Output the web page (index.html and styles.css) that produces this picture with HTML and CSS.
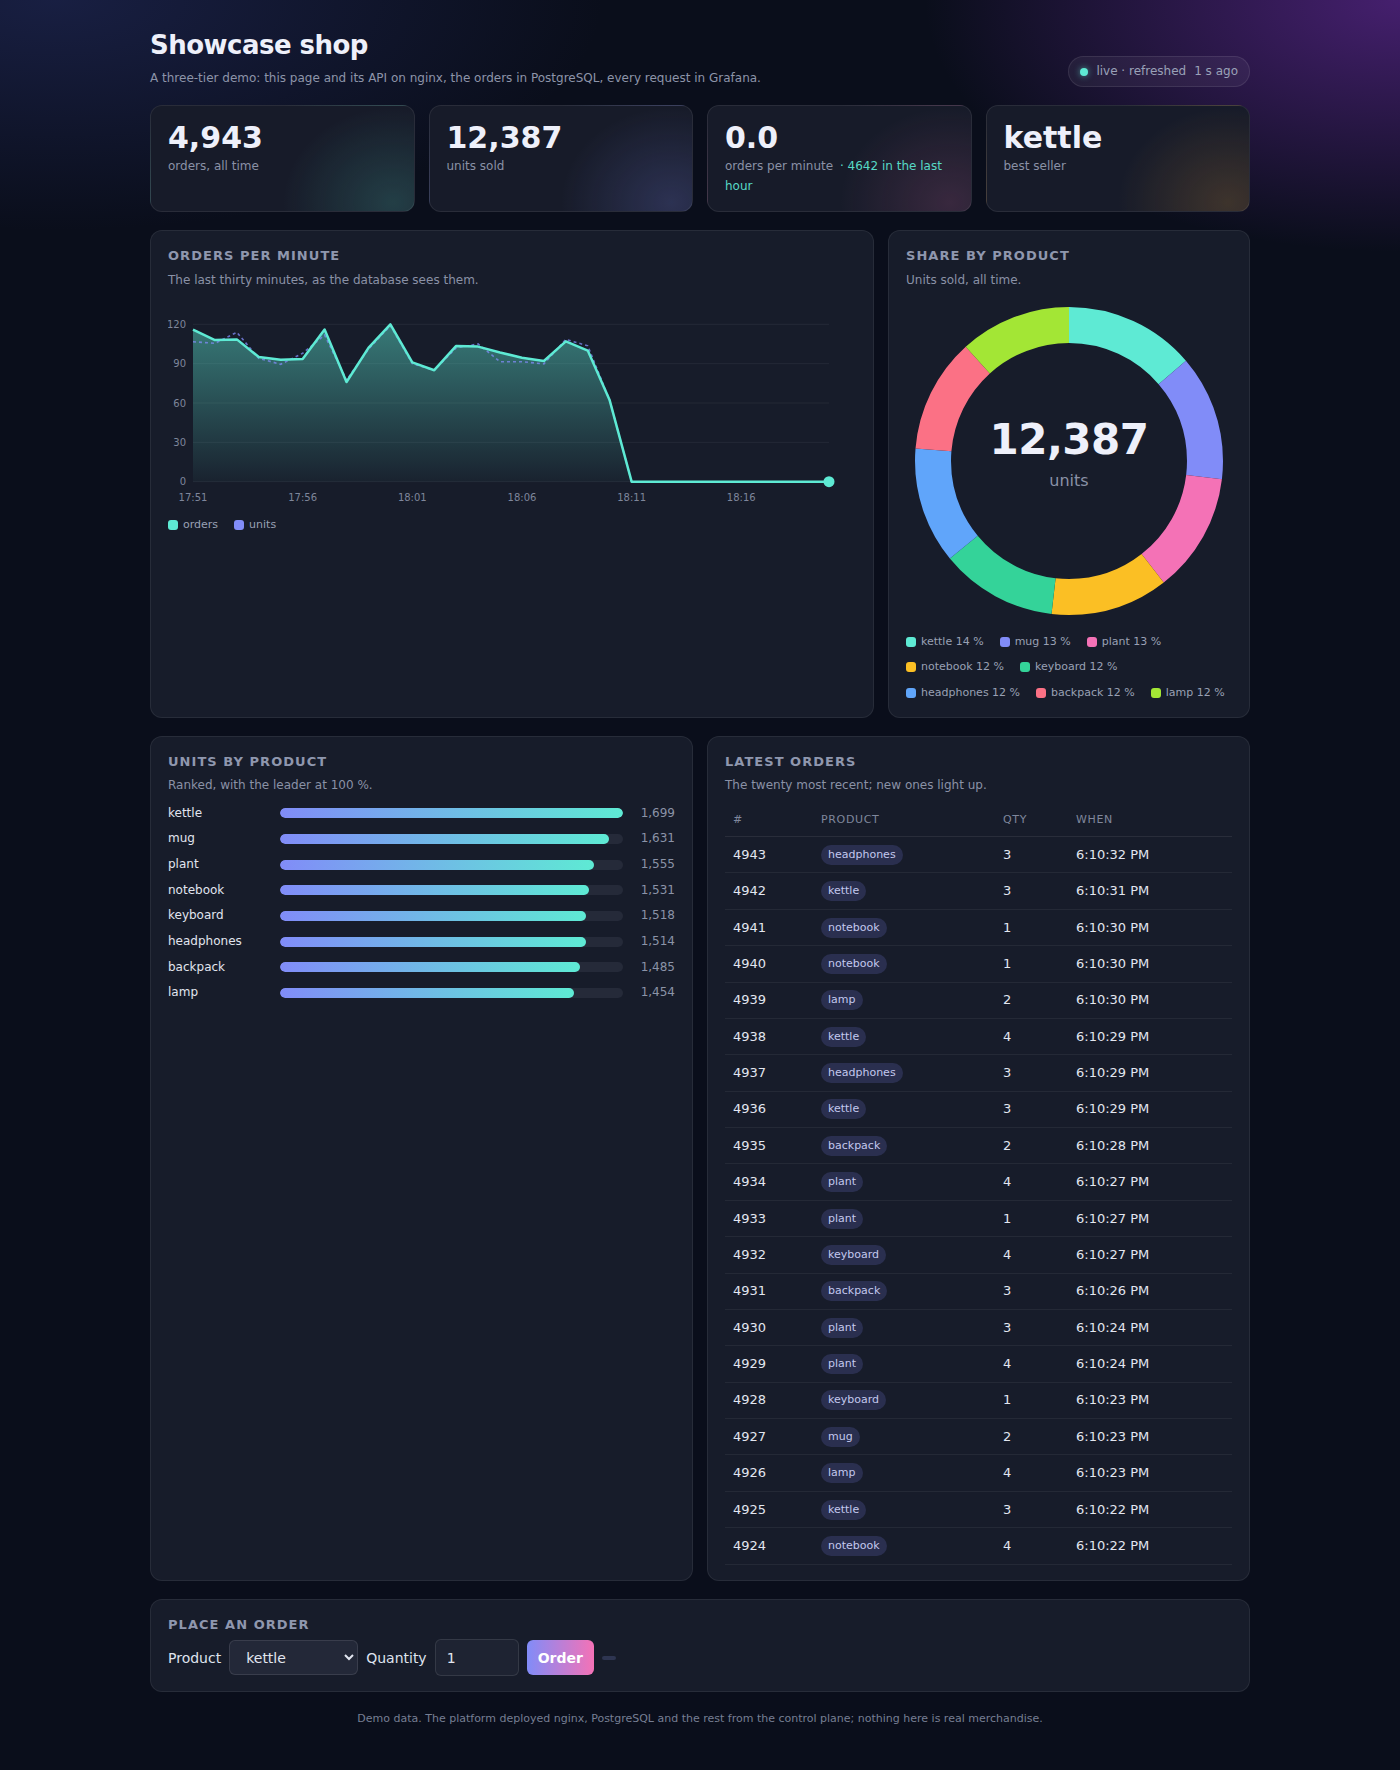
FILE: index.html
```html
<!DOCTYPE html>
<html lang="en">
<head>
<meta charset="utf-8">
<title>Showcase shop</title>
<link rel="stylesheet" href="styles.css">
</head>
<body>
<div class="page">
  <header class="top">
    <div class="intro">
      <h1>Showcase shop</h1>
      <p class="lede">A three-tier demo: this page and its API on nginx, the orders in PostgreSQL, every request in Grafana.</p>
    </div>
    <div class="pill"><span class="dot"></span><span>live · refreshed</span><span>1 s ago</span></div>
  </header>

  <section class="stats">
    <div class="stat stat-teal">
      <div class="stat-num">4,943</div>
      <div class="stat-label">orders, all time</div>
    </div>
    <div class="stat stat-indigo">
      <div class="stat-num">12,387</div>
      <div class="stat-label">units sold</div>
    </div>
    <div class="stat stat-rose">
      <div class="stat-num">0.0</div>
      <div class="stat-label">orders per minute <span class="hint">· 4642 in the last hour</span></div>
    </div>
    <div class="stat stat-amber">
      <div class="stat-num">kettle</div>
      <div class="stat-label">best seller</div>
    </div>
  </section>

  <section class="row row-wide">
    <div class="panel">
      <h2>Orders per minute</h2>
      <p class="sub">The last thirty minutes, as the database sees them.</p>
      <svg class="chart" viewBox="0 0 688 204" width="688" height="204">
        <defs>
          <linearGradient id="fillg" x1="0" y1="20" x2="0" y2="178" gradientUnits="userSpaceOnUse">
            <stop offset="0" stop-color="#5eead4" stop-opacity="0.46"/>
            <stop offset="1" stop-color="#5eead4" stop-opacity="0.03"/>
          </linearGradient>
        </defs>
        <g class="grid">
          <line x1="25" x2="661" y1="20.3" y2="20.3"/>
          <line x1="25" x2="661" y1="59.65" y2="59.65"/>
          <line x1="25" x2="661" y1="99" y2="99"/>
          <line x1="25" x2="661" y1="138.35" y2="138.35"/>
          <line x1="25" x2="661" y1="177.7" y2="177.7"/>
        </g>
        <g class="ylab">
          <text x="18" y="23.8">120</text>
          <text x="18" y="63.15">90</text>
          <text x="18" y="102.5">60</text>
          <text x="18" y="141.85">30</text>
          <text x="18" y="181.2">0</text>
        </g>
        <path class="area" d="M25,177.7 L25,25.54 L46.93,36.04 L68.86,35.38 L90.79,53.09 L112.72,55.71 L134.66,55.06 L156.59,25.54 L178.52,78.01 L200.45,43.91 L222.38,20.3 L244.31,58.34 L266.24,66.21 L288.17,41.94 L310.1,42.59 L332.03,48.5 L353.97,53.74 L375.9,57.02 L397.83,37.35 L419.76,46.53 L441.69,96.37 L463.62,177.7 L661,177.7 Z"/>
        <polyline class="units-line" points="25,37.74 46.93,39.32 68.86,28.3 90.79,54.4 112.72,60.3 134.66,49.28 156.59,31.05 178.52,76.04 200.45,45.22 222.38,21.61 244.31,59.65 266.24,66.21 288.17,43.91 310.1,39.97 332.03,57.68 353.97,57.68 375.9,59.91 397.83,35.38 419.76,41.81 441.69,96.37 463.62,177.7 661,177.7"/>
        <polyline class="orders-line" points="25,25.54 46.93,36.04 68.86,35.38 90.79,53.09 112.72,55.71 134.66,55.06 156.59,25.54 178.52,78.01 200.45,43.91 222.38,20.3 244.31,58.34 266.24,66.21 288.17,41.94 310.1,42.59 332.03,48.5 353.97,53.74 375.9,57.02 397.83,37.35 419.76,46.53 441.69,96.37 463.62,177.7 661,177.7"/>
        <circle class="end-dot" cx="661" cy="177.7" r="5.5"/>
        <g class="xlab">
          <text x="25" y="197.3">17:51</text>
          <text x="134.66" y="197.3">17:56</text>
          <text x="244.31" y="197.3">18:01</text>
          <text x="353.97" y="197.3">18:06</text>
          <text x="463.62" y="197.3">18:11</text>
          <text x="573.28" y="197.3">18:16</text>
        </g>
      </svg>
      <div class="legend">
        <span class="lg"><i class="sw sw-kettle"></i>orders</span>
        <span class="lg"><i class="sw sw-mug"></i>units</span>
      </div>
    </div>

    <div class="panel">
      <h2>Share by product</h2>
      <p class="sub">Units sold, all time.</p>
      <svg class="donut" viewBox="0 0 308 308" width="308" height="308">
        <g transform="rotate(-90 154 154)" fill="none" stroke-width="36">
          <circle cx="154" cy="154" r="136" stroke="#5eead4" stroke-dasharray="117.21 1000" stroke-dashoffset="0"/>
          <circle cx="154" cy="154" r="136" stroke="#818cf8" stroke-dasharray="112.51 1000" stroke-dashoffset="-117.21"/>
          <circle cx="154" cy="154" r="136" stroke="#f472b6" stroke-dasharray="107.27 1000" stroke-dashoffset="-229.72"/>
          <circle cx="154" cy="154" r="136" stroke="#fbbf24" stroke-dasharray="105.62 1000" stroke-dashoffset="-336.99"/>
          <circle cx="154" cy="154" r="136" stroke="#34d399" stroke-dasharray="104.72 1000" stroke-dashoffset="-442.61"/>
          <circle cx="154" cy="154" r="136" stroke="#60a5fa" stroke-dasharray="104.44 1000" stroke-dashoffset="-547.33"/>
          <circle cx="154" cy="154" r="136" stroke="#fb7185" stroke-dasharray="102.44 1000" stroke-dashoffset="-651.77"/>
          <circle cx="154" cy="154" r="136" stroke="#a3e635" stroke-dasharray="100.3 1000" stroke-dashoffset="-754.21"/>
        </g>
        <text class="dn-num" x="154" y="147.3">12,387</text>
        <text class="dn-unit" x="154" y="179">units</text>
      </svg>
      <div class="legend legend-wrap">
        <span class="lg"><i class="sw sw-kettle"></i>kettle 14 %</span>
        <span class="lg"><i class="sw sw-mug"></i>mug 13 %</span>
        <span class="lg"><i class="sw sw-plant"></i>plant 13 %</span>
        <span class="lg"><i class="sw sw-notebook"></i>notebook 12 %</span>
        <span class="lg"><i class="sw sw-keyboard"></i>keyboard 12 %</span>
        <span class="lg"><i class="sw sw-headphones"></i>headphones 12 %</span>
        <span class="lg"><i class="sw sw-backpack"></i>backpack 12 %</span>
        <span class="lg"><i class="sw sw-lamp"></i>lamp 12 %</span>
      </div>
    </div>
  </section>

  <section class="row row-half">
    <div class="panel">
      <h2>Units by product</h2>
      <p class="sub">Ranked, with the leader at 100 %.</p>
      <div class="bars">
        <div class="bar-row"><span class="bar-name">kettle</span><span class="track"><span class="fill" style="width:100%"></span></span><span class="bar-val">1,699</span></div>
        <div class="bar-row"><span class="bar-name">mug</span><span class="track"><span class="fill" style="width:96%"></span></span><span class="bar-val">1,631</span></div>
        <div class="bar-row"><span class="bar-name">plant</span><span class="track"><span class="fill" style="width:91.52%"></span></span><span class="bar-val">1,555</span></div>
        <div class="bar-row"><span class="bar-name">notebook</span><span class="track"><span class="fill" style="width:90.11%"></span></span><span class="bar-val">1,531</span></div>
        <div class="bar-row"><span class="bar-name">keyboard</span><span class="track"><span class="fill" style="width:89.35%"></span></span><span class="bar-val">1,518</span></div>
        <div class="bar-row"><span class="bar-name">headphones</span><span class="track"><span class="fill" style="width:89.11%"></span></span><span class="bar-val">1,514</span></div>
        <div class="bar-row"><span class="bar-name">backpack</span><span class="track"><span class="fill" style="width:87.4%"></span></span><span class="bar-val">1,485</span></div>
        <div class="bar-row"><span class="bar-name">lamp</span><span class="track"><span class="fill" style="width:85.58%"></span></span><span class="bar-val">1,454</span></div>
      </div>
    </div>

    <div class="panel">
      <h2>Latest orders</h2>
      <p class="sub">The twenty most recent; new ones light up.</p>
      <table class="orders">
        <colgroup><col class="c-id"><col class="c-prod"><col class="c-qty"><col></colgroup>
        <thead><tr><th>#</th><th>Product</th><th>Qty</th><th>When</th></tr></thead>
        <tbody>
          <tr><td>4943</td><td><span class="badge">headphones</span></td><td>3</td><td>6:10:32 PM</td></tr>
          <tr><td>4942</td><td><span class="badge">kettle</span></td><td>3</td><td>6:10:31 PM</td></tr>
          <tr><td>4941</td><td><span class="badge">notebook</span></td><td>1</td><td>6:10:30 PM</td></tr>
          <tr><td>4940</td><td><span class="badge">notebook</span></td><td>1</td><td>6:10:30 PM</td></tr>
          <tr><td>4939</td><td><span class="badge">lamp</span></td><td>2</td><td>6:10:30 PM</td></tr>
          <tr><td>4938</td><td><span class="badge">kettle</span></td><td>4</td><td>6:10:29 PM</td></tr>
          <tr><td>4937</td><td><span class="badge">headphones</span></td><td>3</td><td>6:10:29 PM</td></tr>
          <tr><td>4936</td><td><span class="badge">kettle</span></td><td>3</td><td>6:10:29 PM</td></tr>
          <tr><td>4935</td><td><span class="badge">backpack</span></td><td>2</td><td>6:10:28 PM</td></tr>
          <tr><td>4934</td><td><span class="badge">plant</span></td><td>4</td><td>6:10:27 PM</td></tr>
          <tr><td>4933</td><td><span class="badge">plant</span></td><td>1</td><td>6:10:27 PM</td></tr>
          <tr><td>4932</td><td><span class="badge">keyboard</span></td><td>4</td><td>6:10:27 PM</td></tr>
          <tr><td>4931</td><td><span class="badge">backpack</span></td><td>3</td><td>6:10:26 PM</td></tr>
          <tr><td>4930</td><td><span class="badge">plant</span></td><td>3</td><td>6:10:24 PM</td></tr>
          <tr><td>4929</td><td><span class="badge">plant</span></td><td>4</td><td>6:10:24 PM</td></tr>
          <tr><td>4928</td><td><span class="badge">keyboard</span></td><td>1</td><td>6:10:23 PM</td></tr>
          <tr><td>4927</td><td><span class="badge">mug</span></td><td>2</td><td>6:10:23 PM</td></tr>
          <tr><td>4926</td><td><span class="badge">lamp</span></td><td>4</td><td>6:10:23 PM</td></tr>
          <tr><td>4925</td><td><span class="badge">kettle</span></td><td>3</td><td>6:10:22 PM</td></tr>
          <tr><td>4924</td><td><span class="badge">notebook</span></td><td>4</td><td>6:10:22 PM</td></tr>
        </tbody>
      </table>
    </div>
  </section>

  <section class="panel order-panel">
    <h2>Place an order</h2>
    <form class="order-form">
      <label for="prod">Product</label>
      <select id="prod" class="field sel">
        <option>kettle</option><option>mug</option><option>plant</option><option>notebook</option>
        <option>keyboard</option><option>headphones</option><option>backpack</option><option>lamp</option>
      </select>
      <label for="qty">Quantity</label>
      <input id="qty" class="field qty" type="number" value="1" min="1">
      <button type="button" class="btn">Order</button>
      <span class="status"></span>
    </form>
  </section>

  <footer class="foot">Demo data. The platform deployed nginx, PostgreSQL and the rest from the control plane; nothing here is real merchandise.</footer>
</div>
</body>
</html>
```

FILE: styles.css
```css
* { box-sizing: border-box; }

html { background: #0a0e1b; }

body {
  margin: 0;
  min-height: 1770px;
  font-family: "DejaVu Sans", "Noto Sans", sans-serif;
  color: #e2e6f0;
  line-height: 1.6;
  background:
    radial-gradient(760px 320px at 4% 0%, rgba(44, 54, 120, 0.42), transparent 72%),
    radial-gradient(660px 350px at 100% 0%, rgba(112, 44, 170, 0.58), transparent 72%),
    #0a0e1b;
}

.page {
  width: 1100px;
  margin: 0 auto;
  padding: 30px 0 40px;
}

/* header */
.top {
  display: flex;
  justify-content: space-between;
  align-items: flex-end;
  margin-bottom: 17px;
}
.top h1 {
  margin: 0 0 8px;
  font-size: 26px;
  line-height: 1.2;
  font-weight: 700;
  letter-spacing: -0.02em;
  color: #eef0fa;
}
.lede {
  margin: 0;
  font-size: 12px;
  color: #8d94a9;
}
.pill {
  display: flex;
  align-items: center;
  gap: 8px;
  padding: 6px 11px;
  font-size: 12px;
  line-height: 17px;
  color: #9aa1b8;
  background: rgba(255, 255, 255, 0.05);
  border: 1px solid rgba(255, 255, 255, 0.09);
  border-radius: 999px;
  margin-bottom: 1px;
}
.dot {
  width: 8px;
  height: 8px;
  border-radius: 50%;
  background: #5eead4;
  box-shadow: 0 0 6px rgba(94, 234, 212, 0.6);
}

/* stat cards */
.stats {
  display: grid;
  grid-template-columns: repeat(4, 1fr);
  gap: 14px;
  margin-bottom: 18px;
}
.stat {
  padding: 15px 17px;
  border: 1px solid rgba(255, 255, 255, 0.08);
  border-radius: 12px;
  background-color: #171b29;
}
.stat-teal { background-image: radial-gradient(110px 95px at 92% 92%, rgba(94, 234, 212, 0.17), transparent 100%); }
.stat-indigo { background-image: radial-gradient(110px 95px at 92% 92%, rgba(129, 140, 248, 0.2), transparent 100%); }
.stat-rose { background-image: radial-gradient(110px 95px at 92% 92%, rgba(244, 114, 182, 0.15), transparent 100%); }
.stat-amber { background-image: radial-gradient(110px 95px at 92% 92%, rgba(251, 170, 60, 0.17), transparent 100%); }

.stat-num {
  font-size: 30px;
  font-weight: 700;
  line-height: 1.1;
  color: #eef0fa;
}
.stat-label {
  margin-top: 3px;
  font-size: 12px;
  color: #8a91a6;
}
.hint {
  margin-left: 3px;
  color: #57d9c6;
}

/* panels */
.row {
  display: grid;
  gap: 14px;
  margin-bottom: 18px;
}
.row-wide { grid-template-columns: 2fr 1fr; }
.row-half { grid-template-columns: 1fr 1fr; }

.panel {
  padding: 15px 17px;
  border: 1px solid rgba(255, 255, 255, 0.07);
  border-radius: 12px;
  background: #171c2a;
  min-width: 0;
}
.panel h2 {
  margin: 0 0 4px;
  font-size: 13px;
  font-weight: 700;
  text-transform: uppercase;
  letter-spacing: 0.08em;
  color: #8f97ae;
}
.sub {
  margin: 0;
  font-size: 12px;
  color: #8a91a6;
}

/* line chart */
.chart {
  display: block;
  margin-top: 14px;
}
.grid line { stroke: rgba(255, 255, 255, 0.06); stroke-width: 1; }
.ylab text { font-size: 10px; fill: #7e869b; text-anchor: end; font-family: "DejaVu Sans", sans-serif; }
.xlab text { font-size: 10px; fill: #7e869b; text-anchor: middle; font-family: "DejaVu Sans", sans-serif; }
.area { fill: url(#fillg); }
.units-line { fill: none; stroke: #818cf8; stroke-opacity: 0.75; stroke-width: 1.6; stroke-dasharray: 3 3; }
.orders-line { fill: none; stroke: #5eead4; stroke-width: 2.5; stroke-linejoin: round; }
.end-dot { fill: #5eead4; }

.legend {
  display: flex;
  flex-wrap: wrap;
  gap: 8px 16px;
  margin-top: 8px;
  font-size: 11px;
  color: #99a0b4;
}
.lg {
  display: inline-flex;
  align-items: center;
  gap: 5px;
}
.sw {
  width: 10px;
  height: 10px;
  border-radius: 3px;
  display: inline-block;
}
.sw-kettle { background: #5eead4; }
.sw-mug { background: #818cf8; }
.sw-plant { background: #f472b6; }
.sw-notebook { background: #fbbf24; }
.sw-keyboard { background: #34d399; }
.sw-headphones { background: #60a5fa; }
.sw-backpack { background: #fb7185; }
.sw-lamp { background: #a3e635; }

/* donut */
.donut {
  display: block;
  margin: 17.5px auto;
}
.dn-num {
  font-family: "DejaVu Sans", sans-serif;
  font-size: 42px;
  font-weight: 700;
  letter-spacing: -0.5px;
  fill: #eef0fa;
  text-anchor: middle;
}
.dn-unit {
  font-family: "DejaVu Sans", sans-serif;
  font-size: 16px;
  fill: #8a91a6;
  text-anchor: middle;
}
.legend-wrap { margin-top: 0; }

/* bars */
.bars {
  display: flex;
  flex-direction: column;
  gap: 6.5px;
  margin-top: 8px;
}
.bar-row {
  display: grid;
  grid-template-columns: 100px 1fr 40px;
  gap: 12px;
  align-items: center;
  font-size: 12px;
  line-height: 19.2px;
}
.bar-name { color: #e1e5ef; }
.track {
  display: block;
  height: 10px;
  border-radius: 5px;
  background: #252a39;
  overflow: hidden;
}
.fill {
  display: block;
  height: 100%;
  border-radius: 5px;
  background: linear-gradient(90deg, #818cf8, #5eead4);
}
.bar-val {
  text-align: right;
  color: #8b93a7;
}

/* table */
.orders {
  width: 100%;
  margin-top: 7px;
  border-collapse: collapse;
  table-layout: fixed;
  font-size: 13px;
}
.c-id { width: 88px; }
.c-prod { width: 182px; }
.c-qty { width: 73px; }
.orders th {
  padding: 8px 8px;
  text-align: left;
  font-size: 11px;
  font-weight: 400;
  line-height: 17.6px;
  text-transform: uppercase;
  letter-spacing: 0.06em;
  color: #7f879c;
  border-bottom: 1px solid rgba(255, 255, 255, 0.08);
}
.orders td {
  padding: 7.7px 8px;
  line-height: 20px;
  color: #e2e6f0;
  border-bottom: 1px solid rgba(255, 255, 255, 0.06);
  vertical-align: middle;
}
.badge {
  display: inline-block;
  vertical-align: top;
  height: 20px;
  padding: 0 7px;
  font-size: 11px;
  line-height: 20px;
  border-radius: 10px;
  background: #2a2f4f;
  color: #c3c8ee;
}

/* order form */
.order-panel { margin-bottom: 0; }
.order-form {
  display: flex;
  align-items: center;
  gap: 8px;
  margin-top: 4px;
}
.order-form label {
  font-size: 14px;
  color: #dfe3ee;
}
.field {
  font-family: "DejaVu Sans", sans-serif;
  font-size: 14px;
  color: #e2e6f0;
  border: 1px solid rgba(255, 255, 255, 0.1);
  border-radius: 6px;
  color-scheme: dark;
}
.sel {
  width: 129px;
  height: 35px;
  padding: 0 6px 0 12px;
  background-color: #232838;
}
.qty {
  width: 84px;
  height: 37px;
  padding: 0 11px;
  background-color: #1e2332;
}
.btn {
  height: 35px;
  padding: 0 11px;
  border: 0;
  border-radius: 6px;
  font-family: "DejaVu Sans", sans-serif;
  font-size: 14px;
  font-weight: 700;
  color: #ffffff;
  background: linear-gradient(90deg, #818cf8, #f472b6);
}
.status {
  display: inline-block;
  width: 14px;
  height: 4px;
  border-radius: 2px;
  background: #2e3551;
}

/* footer */
.foot {
  margin-top: 17.5px;
  text-align: center;
  font-size: 11px;
  line-height: 17.6px;
  color: #767e93;
}
```
